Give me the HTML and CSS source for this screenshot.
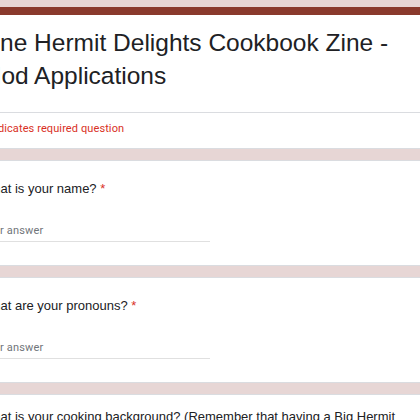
FILE: index.html
```html
<!DOCTYPE html>
<html lang="en">
<head>
<meta charset="utf-8">
<title>One Hermit Delights Cookbook Zine - Mod Applications</title>
<link rel="stylesheet" href="styles.css">
</head>
<body>
<main class="form">
  <section class="card card--header">
    <h1 class="form-title">One Hermit Delights Cookbook Zine - Mod Applications</h1>
    <div class="required-note">* Indicates required question</div>
  </section>

  <section class="card question">
    <div class="question-title">What is your name? <span class="req">*</span></div>
    <div class="answer">Your answer</div>
  </section>

  <section class="card question">
    <div class="question-title">What are your pronouns? <span class="req">*</span></div>
    <div class="answer">Your answer</div>
  </section>

  <section class="card question question--compact">
    <div class="question-title">What is your cooking background? (Remember that having a Big Hermit kitchen is not required!) <span class="req">*</span></div>
    <div class="answer">Your answer</div>
  </section>
</main>
</body>
</html>
```

FILE: styles.css
```css
html, body {
  margin: 0;
  padding: 0;
}

body {
  background: #e7d6d5;
  overflow: hidden;
  color: #202124;
  font-family: "Liberation Sans", Arial, sans-serif;
}

.form {
  display: flex;
  flex-direction: column;
  gap: 11px;
  padding-top: 7px;
  margin-left: -44px;
  width: 490px;
}

.card {
  background: #ffffff;
  border: 1px solid #dadce0;
  border-radius: 8px;
  padding: 0 24px;
}

.card--header {
  border-top: 8px solid #8a3a2d;
  border-top-left-radius: 8px;
  border-top-right-radius: 8px;
  padding: 0;
}

.form-title {
  margin: 0;
  padding: 11px 24px 20px 24px;
  font-size: 24.5px;
  line-height: 33px;
  font-weight: 400;
  color: #202124;
  border-bottom: 1px solid #dadce0;
}

.required-note {
  padding: 8px 24px 11px 24px;
  font-family: Roboto, "Liberation Sans", sans-serif;
  font-size: 11px;
  line-height: 16px;
  letter-spacing: 0.1px;
  color: #d93025;
}

.question {
  padding-top: 19px;
  padding-bottom: 23px;
  display: flex;
  flex-direction: column;
  gap: 25px;
}

.question--compact {
  padding-top: 13px;
}

.question-title {
  font-size: 13px;
  line-height: 18px;
  color: #202124;
}

.req {
  color: #d93025;
}

.answer {
  width: 229px;
  font-family: Roboto, "Liberation Sans", sans-serif;
  font-size: 11px;
  line-height: 16px;
  letter-spacing: 0.15px;
  color: #70757a;
  padding-bottom: 2px;
  border-bottom: 1px solid #e0e0e0;
}
```
